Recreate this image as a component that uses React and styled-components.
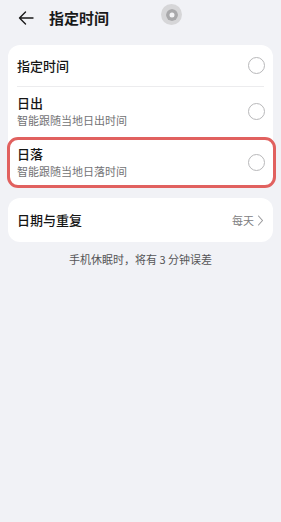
import React from 'react'
import styled, { createGlobalStyle } from 'styled-components'

const GlobalStyle = createGlobalStyle`
  html, body {
    margin: 0;
    padding: 0;
    background: #f1f2f6;
  }
  body {
    font-family: "Noto Sans CJK SC", "Noto Sans", sans-serif;
    color: #1a1a1a;
  }
`

const Page = styled.div`
  width: 281px;
  height: 522px;
  background: #f1f2f6;
  position: relative;
  overflow: hidden;
`

const Header = styled.div`
  height: 35px;
  display: flex;
  align-items: center;
  padding-left: 18px;
  gap: 15px;
`

const Title = styled.div`
  font-size: 15px;
  font-weight: 700;
  line-height: 1;
`

const FloatBall = styled.div`
  position: absolute;
  left: 161px;
  top: 4px;
  width: 21px;
  height: 21px;
  border-radius: 50%;
  background: #d6d6d8;
  display: flex;
  align-items: center;
  justify-content: center;
  &::after {
    content: '';
    width: 12px;
    height: 12px;
    border-radius: 50%;
    background: #f4f4f6;
    box-shadow: inset 0 0 0 3.5px #a9a9ab;
  }
`

const Content = styled.div`
  padding: 10px 8px 0;
  display: flex;
  flex-direction: column;
`

const Card = styled.div`
  background: #fff;
  border-radius: 12px;
  display: flex;
  flex-direction: column;
`

const Row = styled.div`
  position: relative;
  display: flex;
  align-items: center;
  justify-content: space-between;
  padding: 0 9px;
  height: ${p => p.h}px;
  &::before {
    content: '';
    display: ${p => (p.divider ? 'block' : 'none')};
    position: absolute;
    left: 9px;
    right: 9px;
    top: 0;
    height: 1px;
    background: #ececee;
  }
  &::after {
    content: '';
    display: ${p => (p.highlight ? 'block' : 'none')};
    position: absolute;
    left: -1px;
    right: -3px;
    top: 0px;
    bottom: 0px;
    border: 3.5px solid #e1615f;
    border-radius: 11px;
  }
`

const Texts = styled.div`
  display: flex;
  flex-direction: column;
  gap: 4px;
`

const Label = styled.div`
  font-size: 13px;
  font-weight: 500;
  line-height: 14px;
  color: #151515;
`

const Sub = styled.div`
  font-size: 11px;
  line-height: 13px;
  color: #737375;
`

const Radio = styled.div`
  width: 15px;
  height: 15px;
  border-radius: 50%;
  border: 1px solid #b8b8ba;
  margin-right: -1px;
`

const Card2 = styled(Card)`
  margin-top: 10px;
`

const Right = styled.div`
  display: flex;
  align-items: center;
  gap: 3px;
  font-size: 11px;
  color: #808082;
`

const Note = styled.div`
  text-align: center;
  font-size: 11px;
  color: #555557;
  margin-top: 11px;
  line-height: 13px;
`

export default function App() {
  return (
    <Page>
      <GlobalStyle />
      <Header>
        <svg width="16" height="14" viewBox="0 0 16 14" fill="none" stroke="#1a1a1a" strokeWidth="1.4" strokeLinecap="round" strokeLinejoin="round">
          <path d="M15 7H1.5M7.5 1L1.5 7l6 6" />
        </svg>
        <Title>指定时间</Title>
      </Header>
      <FloatBall />
      <Content>
        <Card>
          <Row h={41}>
            <Label>指定时间</Label>
            <Radio />
          </Row>
          <Row h={51} divider>
            <Texts>
              <Label>日出</Label>
              <Sub>智能跟随当地日出时间</Sub>
            </Texts>
            <Radio />
          </Row>
          <Row h={51} divider highlight>
            <Texts>
              <Label>日落</Label>
              <Sub>智能跟随当地日落时间</Sub>
            </Texts>
            <Radio />
          </Row>
        </Card>
        <Card2>
          <Row h={44}>
            <Label>日期与重复</Label>
            <Right>
              每天
              <svg width="7" height="11" viewBox="0 0 7 11" fill="none" stroke="#9a9a9c" strokeWidth="1.1" strokeLinecap="round" strokeLinejoin="round">
                <path d="M1.5 1l4 4.5-4 4.5" />
              </svg>
            </Right>
          </Row>
        </Card2>
        <Note>手机休眠时，将有 3 分钟误差</Note>
      </Content>
    </Page>
  )
}
